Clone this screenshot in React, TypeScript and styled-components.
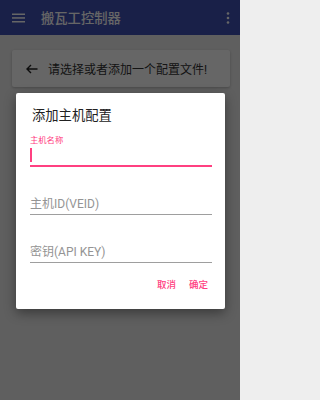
import React from "react"
import styled, { createGlobalStyle } from "styled-components"

const GlobalStyle = createGlobalStyle`
  html, body {
    margin: 0;
    padding: 0;
    background: #eeeeee;
  }
  body {
    font-family: Roboto, "Noto Sans CJK SC", sans-serif;
  }
`

const Page = styled.div`
  position: relative;
  display: flex;
  flex-direction: column;
  width: 240px;
  height: 400px;
  overflow: hidden;
  background: #eeeeee;
`

const Toolbar = styled.div`
  display: flex;
  align-items: center;
  height: 35px;
  padding: 0 10px 0 12px;
  background: #3f51b5;
  color: #ffffff;
`

const ToolbarTitle = styled.div`
  flex: 1;
  margin-left: 16px;
  font-size: 13.3px;
  font-weight: 500;
`

const Content = styled.div`
  padding: 15px 10px 0 12px;
`

const Card = styled.div`
  display: flex;
  align-items: center;
  height: 37px;
  padding-left: 14px;
  background: #ffffff;
  border-radius: 2px;
  box-shadow: 0 1px 3px rgba(0, 0, 0, 0.25);
  color: #333333;
  font-size: 12px;
`

const CardText = styled.span`
  margin-left: 10px;
`

const Scrim = styled.div`
  position: absolute;
  inset: 0;
  background: rgba(0, 0, 0, 0.6);
`

const Dialog = styled.div`
  position: absolute;
  top: 93px;
  left: 16px;
  width: 209px;
  height: 216px;
  box-sizing: border-box;
  padding: 14px 13px 0 14px;
  background: #ffffff;
  border-radius: 2px;
  box-shadow: 0 4px 12px rgba(0, 0, 0, 0.4);
  display: flex;
  flex-direction: column;
`

const DialogTitle = styled.div`
  margin-left: 2px;
  margin-bottom: 10px;
  font-size: 13.3px;
  line-height: 18px;
  color: #212121;
`

const Field = styled.div<{ $active?: boolean }>`
  display: flex;
  flex-direction: column;
  justify-content: space-between;
  height: ${(p) => (p.$active ? "30px" : "20px")};
  margin-top: ${(p) => (p.$active ? "0" : "27px")};
  border-bottom: ${(p) => (p.$active ? "2px solid #ff4081" : "1px solid #9e9e9e")};
`

const FieldLabel = styled.div`
  font-size: 8.3px;
  line-height: 10px;
  color: #ff4081;
`

const Cursor = styled.div`
  width: 1.5px;
  height: 14px;
  margin-bottom: 3px;
  background: #ff4081;
`

const Hint = styled.div`
  margin-top: auto;
  font-size: 12px;
  line-height: 16px;
  padding-bottom: 2px;
  color: #949494;
`

const Actions = styled.div`
  display: flex;
  justify-content: flex-end;
  gap: 13px;
  margin-top: 14px;
  padding-right: 4px;
`

const ActionButton = styled.div`
  font-size: 9.5px;
  font-weight: 500;
  color: #ff4081;
`

const Menu = () => (
  <svg width="13" height="10" viewBox="0 0 13 10">
    <rect x="0" y="0.5" width="13" height="1.5" fill="#fff" />
    <rect x="0" y="4.2" width="13" height="1.5" fill="#fff" />
    <rect x="0" y="8" width="13" height="1.5" fill="#fff" />
  </svg>
)

const Dots = () => (
  <svg width="4" height="12" viewBox="0 0 4 12">
    <circle cx="2" cy="1.5" r="1.3" fill="#fff" />
    <circle cx="2" cy="6" r="1.3" fill="#fff" />
    <circle cx="2" cy="10.5" r="1.3" fill="#fff" />
  </svg>
)

const ArrowLeft = () => (
  <svg width="12" height="10" viewBox="0 0 12 10">
    <path d="M11.5 5H1.2M5 1L1 5l4 4" fill="none" stroke="#222" strokeWidth="1.4" />
  </svg>
)

const App = (): JSX.Element => {
  return (
    <Page>
      <GlobalStyle />
      <Toolbar>
        <Menu />
        <ToolbarTitle>搬瓦工控制器</ToolbarTitle>
        <Dots />
      </Toolbar>
      <Content>
        <Card>
          <ArrowLeft />
          <CardText>请选择或者添加一个配置文件!</CardText>
        </Card>
      </Content>
      <Scrim />
      <Dialog>
        <DialogTitle>添加主机配置</DialogTitle>
        <Field $active>
          <FieldLabel>主机名称</FieldLabel>
          <Cursor />
        </Field>
        <Field>
          <Hint>主机ID(VEID)</Hint>
        </Field>
        <Field>
          <Hint>密钥(API KEY)</Hint>
        </Field>
        <Actions>
          <ActionButton>取消</ActionButton>
          <ActionButton>确定</ActionButton>
        </Actions>
      </Dialog>
    </Page>
  )
}

export default App
